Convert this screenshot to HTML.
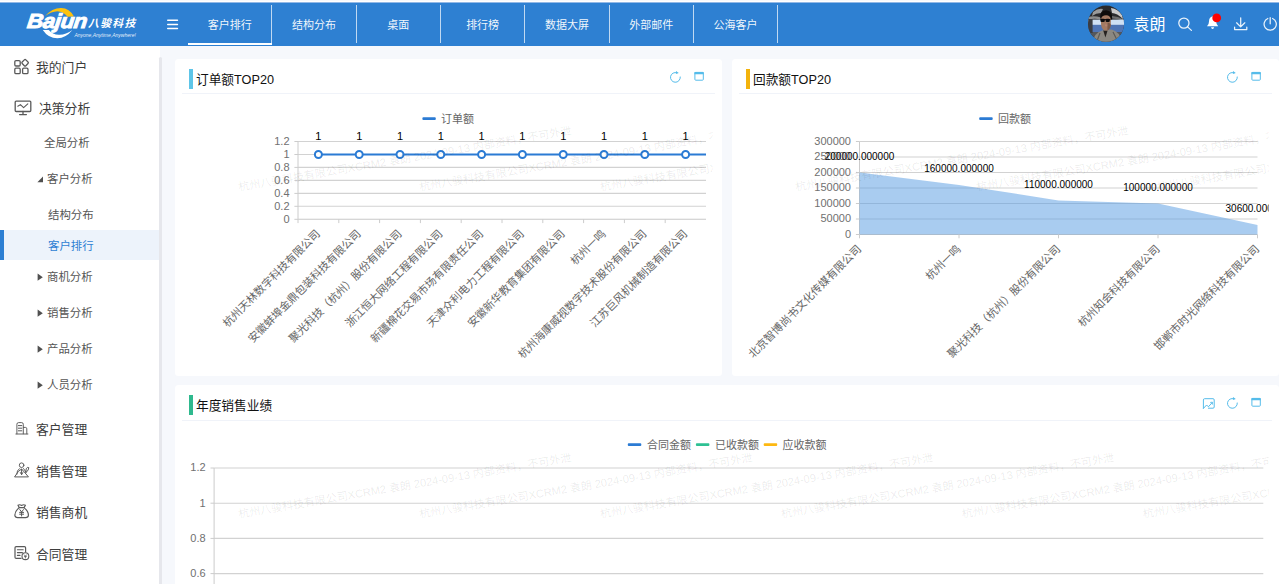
<!DOCTYPE html>
<html lang="zh-CN"><head><meta charset="utf-8"><title>客户排行</title>
<style>
*{box-sizing:border-box;margin:0;padding:0}
html,body{width:1279px;height:584px;overflow:hidden}
body{background:#f6f8fc;font-family:"Liberation Sans","Noto Sans CJK SC",sans-serif;position:relative;color:#333}
#top{position:absolute;left:0;top:0;width:1279px;height:46px;background:linear-gradient(#f8f9fb 0,#f8f9fb 1px,#fff 1px,#fff 2px,#92b8e6 2px,#92b8e6 3px,#2e80d2 3px)}
.tab{position:absolute;top:5px;height:38px;width:84.28px;border-right:1px solid rgba(255,255,255,.7);color:rgba(255,255,255,.94);font-size:11px;text-align:center;line-height:40px}
.tab.on:after{content:"";position:absolute;left:0;right:-1px;bottom:-1.7px;height:2px;background:#fff}
#side{position:absolute;left:0;top:46px;width:160px;height:538px;background:#fff}
#sbar{position:absolute;left:158.6px;top:57px;width:3px;height:600px;background:#e6e7ec;border-radius:2px}
.m1{position:absolute;left:36px;font-size:12.8px;color:#3d3d3d;line-height:20px;white-space:nowrap}
.m2{position:absolute;font-size:11.4px;color:#555;line-height:18px;white-space:nowrap}
.panel{position:absolute;background:#fff;border-radius:3.5px}
.ptitle{position:absolute;left:21px;top:12.2px;font-size:12.7px;color:#111;line-height:18px;white-space:nowrap;}
.pbar{position:absolute;left:14px;top:10px;width:4px;height:20px}
.pline{position:absolute;left:7px;right:7px;top:34px;height:1px;background:#f0f3f9}
svg text{font-family:"Liberation Sans","Noto Sans CJK SC",sans-serif}
svg{position:absolute;left:0;top:0}
</style></head><body>
<div id="side"></div>
<div id="sbar"></div>
<div id="top"></div>

<!-- tabs -->
<div class="tab on" style="left:188.10px">客户排行</div>
<div class="tab" style="left:272.40px">结构分布</div>
<div class="tab" style="left:356.70px">桌面</div>
<div class="tab" style="left:441.00px">排行榜</div>
<div class="tab" style="left:525.30px">数据大屏</div>
<div class="tab" style="left:609.60px">外部邮件</div>
<div class="tab" style="left:693.90px">公海客户</div>

<!-- sidebar items -->
<div class="m1" style="top:57.7px">我的门户</div>
<div class="m1" style="top:98.7px;left:39px">决策分析</div>
<div class="m2" style="top:134.3px;left:44px">全局分析</div>
<div class="m2" style="top:170.3px;left:47px">客户分析</div>
<div class="m2" style="top:206.3px;left:48px">结构分布</div>
<div style="position:absolute;left:0;top:229.5px;width:159px;height:30.7px;background:#edf3fb;border-left:4px solid #2d7fd3"></div>
<div class="m2" style="top:237.3px;left:48px;color:#2d7fd3">客户排行</div>
<div class="m2" style="top:268.3px;left:47px">商机分析</div>
<div class="m2" style="top:304.3px;left:47px">销售分析</div>
<div class="m2" style="top:340.3px;left:47px">产品分析</div>
<div class="m2" style="top:376.3px;left:47px">人员分析</div>
<div class="m1" style="top:419.7px">客户管理</div>
<div class="m1" style="top:461.7px">销售管理</div>
<div class="m1" style="top:502.7px">销售商机</div>
<div class="m1" style="top:544.7px">合同管理</div>

<!-- panels -->
<div class="panel" style="left:175px;top:59px;width:547px;height:317.3px"><div class="pbar" style="background:#5ec5e8"></div><div class="ptitle">订单额TOP20</div><div class="pline"></div></div>
<div class="panel" style="left:732px;top:59px;width:547px;height:317.3px"><div class="pbar" style="background:#f3b30d"></div><div class="ptitle">回款额TOP20</div><div class="pline"></div></div>
<div class="panel" style="left:175px;top:385px;width:1104px;height:260px"><div class="pbar" style="background:#2fb98e"></div><div class="ptitle" style="top:11.7px">年度销售业绩</div><div class="pline" style="top:35px"></div></div>

<svg width="1279" height="584" viewBox="0 0 1279 584">
<rect x="167" y="19.5" width="11.2" height="1.45" rx=".7" fill="#fff"/>
<rect x="167" y="23.7" width="11.2" height="1.45" rx=".7" fill="#fff"/>
<rect x="167" y="27.8" width="11.2" height="1.45" rx=".7" fill="#fff"/>
<g fill="none" stroke="#595959" stroke-width="1.3" stroke-linejoin="round"><rect x="14.8" y="60.6" width="5.4" height="5.4" rx="1.2"/><rect x="14.8" y="68.2" width="5.4" height="5.4" rx="1.2"/><rect x="22.6" y="68.2" width="5.4" height="5.4" rx="1.2"/><rect x="22.5" y="60.2" width="5.2" height="5.2" rx="1.1" transform="rotate(45 25.1 62.8)"/></g>
<g fill="none" stroke="#595959" stroke-width="1.3" stroke-linejoin="round" stroke-linecap="round"><rect x="15.2" y="101.1" width="15.6" height="10.4" rx="1"/><path d="M23 111.5V114.4M19.6 114.6H26.4"/><path d="M17.8 106.2L20.4 104.6L23.6 107.6L27.8 103.8" stroke-width="1.1"/></g>
<g fill="none" stroke="#595959" stroke-width=".95" stroke-linejoin="round" stroke-linecap="round"><path d="M16.9 433.8V424.3Q16.9 422.6 18.6 422.6H21.6Q23.3 422.6 23.3 424.3V433.8"/><path d="M23.3 427.4H25.4Q26.8 427.4 26.8 428.8V433.8"/><path d="M15.9 434H27.9"/><path d="M18.4 425.6H21.8M18.4 428.2H21.8M18.4 430.8H21.8" stroke-width="1"/></g>
<g fill="none" stroke="#595959" stroke-width=".95" stroke-linejoin="round" stroke-linecap="round"><circle cx="21.6" cy="465.2" r="2.3"/><path d="M19.4 468.6Q16.6 470.4 16.8 474.2M23.6 468.6L26 472.2"/><path d="M14.8 476.6L18.4 471.4L21.6 469L25.2 473L28.2 476.6Z" stroke-width="1"/><path d="M21.6 469.2V474.4M20.4 472.6L21.6 474.6L22.8 472.6" stroke-width="1"/><path d="M25.8 472.4L26.2 468.8Q27.4 466.6 28.8 467.6Q29 469.8 26.2 472.4" stroke-width="1"/></g>
<g fill="none" stroke="#595959" stroke-width="1.2" stroke-linejoin="round" stroke-linecap="round"><path d="M19.2 507.6L18 505.2Q19.6 504.2 21.6 505.4Q23.6 504.2 25.4 505.2L24 507.6"/><path d="M19.2 507.6Q14.6 511.4 14.9 515.4Q15.2 517.6 17.6 517.6H25.6Q28.2 517.6 28.4 515.4Q28.6 511.4 24 507.6Z"/><path d="M19.8 509.6L21.6 512L23.4 509.6M21.6 512V516M19.6 512.4H23.6M19.6 514.2H23.6" stroke-width="1"/></g>
<g fill="none" stroke="#595959" stroke-width="1.2" stroke-linejoin="round" stroke-linecap="round"><path d="M21 558.4H16.2Q15 558.4 15 557.2V547.8Q15 546.6 16.2 546.6H24.4Q25.6 546.6 25.6 547.8V552"/><path d="M17.4 549.8H23.2M17.4 552.6H22.4M17.4 555.4H20" stroke-width="1.1"/><circle cx="25.4" cy="556.2" r="3.4" fill="#fff" stroke-width="1.1"/><path d="M24.2 554.8L25.4 556.2L26.6 554.8M25.4 556.2V558M24.4 556.6H26.4" stroke-width=".8"/></g>
<path d="M37.4 182.2H43V176.6Z" fill="#505050"/>
<path d="M37.6 273.59999999999997L42.8 277.2L37.6 280.8Z" fill="#505050"/>
<path d="M37.6 309.59999999999997L42.8 313.2L37.6 316.8Z" fill="#505050"/>
<path d="M37.6 345.59999999999997L42.8 349.2L37.6 352.8Z" fill="#505050"/>
<path d="M37.6 381.59999999999997L42.8 385.2L37.6 388.8Z" fill="#505050"/>
<g fill="none" stroke="#fff" stroke-opacity=".9" stroke-width="1.25" stroke-linecap="round" stroke-linejoin="round"><circle cx="1183.9" cy="23.1" r="5.1"/><path d="M1187.6 26.9L1191.4 30.4"/><path d="M1240.7 17.8V26.6M1236.6 22.8L1240.7 26.9L1244.8 22.8M1234.6 27.2V29.6H1246.8V27.2"/><path d="M1270.2 17.6V23.8M1267.8 18.5A6.1 6.1 0 1 0 1272.6 18.5"/></g>
<path d="M1212.6 16.2Q1209 17 1209 21.4Q1209 24.4 1207 26.2H1218.2Q1216.2 24.4 1216.2 21.4Q1216.2 17 1212.6 16.2Z" fill="#fff"/><path d="M1211 27.2H1214.2Q1213.8 28.9 1212.6 28.9Q1211.4 28.9 1211 27.2Z" fill="#fff"/><circle cx="1216.7" cy="17.9" r="4.4" fill="#ff0000"/>
<g fill="none" stroke="#55bcea" stroke-width="1" stroke-linecap="round" stroke-linejoin="round"><path d="M677.0 72.7A4.9 4.9 0 1 0 680.3 77.0"/></g><path d="M676.0 71.1L678.8 73.0L675.8 74.0Z" fill="#55bcea"/>
<rect x="694.9" y="72.4" width="8.4" height="7.8" rx=".8" fill="none" stroke="#55bcea" stroke-width="1"/><rect x="694.4" y="71.9" width="9.4" height="2.4" rx=".6" fill="#55bcea"/>
<g fill="none" stroke="#55bcea" stroke-width="1" stroke-linecap="round" stroke-linejoin="round"><path d="M1234.0 72.7A4.9 4.9 0 1 0 1237.3 77.0"/></g><path d="M1233.0 71.1L1235.8 73.0L1232.8 74.0Z" fill="#55bcea"/>
<rect x="1251.9" y="72.4" width="8.4" height="7.8" rx=".8" fill="none" stroke="#55bcea" stroke-width="1"/><rect x="1251.4" y="71.9" width="9.4" height="2.4" rx=".6" fill="#55bcea"/>
<g fill="none" stroke="#55bcea" stroke-width="1" stroke-linecap="round" stroke-linejoin="round"><path d="M1234.0 398.7A4.9 4.9 0 1 0 1237.3 403.0"/></g><path d="M1233.0 397.1L1235.8 399.0L1232.8 400.0Z" fill="#55bcea"/>
<rect x="1251.9" y="398.4" width="8.4" height="7.8" rx=".8" fill="none" stroke="#55bcea" stroke-width="1"/><rect x="1251.4" y="397.9" width="9.4" height="2.4" rx=".6" fill="#55bcea"/>
<g fill="none" stroke="#55bcea" stroke-width="1" stroke-linejoin="round" stroke-linecap="round"><path d="M1203.4 408.4V399.9Q1203.4 398.7 1204.6 398.7H1213Q1214.2 398.7 1214.2 399.9V407Q1214.2 408.2 1213 408.2H1208.4"/><path d="M1203.6 408.2L1206.6 405L1208.4 406.8L1212 402.8" stroke-width="1"/><path d="M1210.6 402.4L1212.4 402.2L1212.4 404.2" stroke-width=".9"/></g>
<path d="M45.2 16.1Q52 8.2 61 8Q69.6 8.2 74 16.6L67.6 16.8Q63.4 11.4 57.4 11.2Q51.4 11.4 45.2 16.1Z" fill="#fdc20f"/>
<path d="M42.8 30Q48.2 38.2 57.4 38.3Q66 38 72.4 30Q65.4 35.2 58.8 34.8Q52.6 34.6 48.8 30Z" fill="#fff"/>
<g transform="translate(26.6,28) scale(1.125,1.02) skewX(-6)"><text x="0" y="0" font-size="20" font-weight="bold" font-style="italic" fill="#fff" stroke="#fff" stroke-width=".9" letter-spacing="-0.5">Bajun</text></g>
<g transform="translate(88,27.1) skewX(-14)"><text x="0" y="0" font-size="10.8" font-weight="bold" fill="#fff" letter-spacing="1.4">八骏科技</text></g>
<text x="74.4" y="36.6" font-size="5" font-style="italic" fill="#fff" fill-opacity=".9">Anyone,Anytime,Anywhere!</text>
<defs><clipPath id="avc"><circle cx="1106" cy="23.7" r="18.1"/></clipPath></defs>
<g clip-path="url(#avc)">
<rect x="1087" y="5" width="38" height="38" fill="#2b2b2d"/>
<path d="M1093 12Q1098 8 1103 9L1101 13Q1096 13 1092 16Z" fill="#9a9a9a"/>
<path d="M1111 8Q1118 9 1122 15L1123 19Q1117 13 1112 13Z" fill="#c9c9c9"/>
<path d="M1088 17Q1094 15.4 1101 17.4L1101 19.4Q1094 18 1088 19.6Z" fill="#8d8d8d"/>
<path d="M1112 16Q1118 16 1124 19.6L1124 21Q1118 18.6 1112 18.4Z" fill="#6d6d6d"/>
<rect x="1087" y="19.6" width="38" height="5.4" fill="#cfe0f4"/>
<rect x="1087" y="24.8" width="38" height="7.6" fill="#4f74b4"/>
<rect x="1087" y="32" width="38" height="11" fill="#54575c"/>
<rect x="1088" y="19" width="4.6" height="14" fill="#3a3c42"/>
<path d="M1092.6 44Q1093 33.4 1102.6 30.2L1111.6 29.4Q1121 32 1122.6 44Z" fill="#8b8881"/>
<path d="M1100 33L1097 41M1113 32L1117 40" stroke="#5d5b57" stroke-width="1.2" fill="none"/>
<path d="M1103.2 30.4L1105.4 37.4L1107.6 30.6Z" fill="#25221f"/>
<path d="M1101 17.2Q1101 14.4 1106 14.4Q1111 14.4 1111 17.6L1110.8 24.6Q1110.2 29.6 1107.4 30.6L1104.4 30.6Q1101.4 28.6 1101 24Z" fill="#a47a62"/>
<path d="M1107.6 22.4Q1110.8 23 1110.8 25Q1110.2 29.6 1107.4 30.6Z" fill="#7c5948"/>
<path d="M1105 24.4Q1106.6 23.8 1107.4 25L1106.8 26.6L1105 26.2Z" fill="#b5806f"/>
<path d="M1100.2 18.6Q1099.4 10.4 1106.2 10.2Q1113 10.4 1112.2 19.4L1110.8 19.4Q1110.6 15.4 1106 15.2Q1101.6 15.2 1101.2 18.8Z" fill="#0e0c0b"/>
<rect x="1100.4" y="18.8" width="4.4" height="3.2" rx="1.3" fill="#0a0a0c"/><rect x="1105.6" y="18.8" width="4.2" height="3.2" rx="1.3" fill="#0a0a0c"/><rect x="1100.4" y="19" width="10" height=".9" fill="#0a0a0c"/>
</g>
<text x="1133.6" y="30.2" font-size="16" fill="#fff">袁朗</text>
<g id="c1">
<line x1="298" y1="141.5" x2="706" y2="141.5" stroke="#d2d2d2" stroke-width="1.1"/>
<line x1="294.4" y1="141.5" x2="298" y2="141.5" stroke="#ccc" stroke-width="1"/>
<text x="289.5" y="144.9" text-anchor="end" font-size="11" fill="#707070">1.2</text>
<line x1="298" y1="154.5" x2="706" y2="154.5" stroke="#d2d2d2" stroke-width="1.1"/>
<line x1="294.4" y1="154.5" x2="298" y2="154.5" stroke="#ccc" stroke-width="1"/>
<text x="289.5" y="157.9" text-anchor="end" font-size="11" fill="#707070">1</text>
<line x1="298" y1="167.4" x2="706" y2="167.4" stroke="#d2d2d2" stroke-width="1.1"/>
<line x1="294.4" y1="167.4" x2="298" y2="167.4" stroke="#ccc" stroke-width="1"/>
<text x="289.5" y="170.8" text-anchor="end" font-size="11" fill="#707070">0.8</text>
<line x1="298" y1="180.4" x2="706" y2="180.4" stroke="#d2d2d2" stroke-width="1.1"/>
<line x1="294.4" y1="180.4" x2="298" y2="180.4" stroke="#ccc" stroke-width="1"/>
<text x="289.5" y="183.8" text-anchor="end" font-size="11" fill="#707070">0.6</text>
<line x1="298" y1="193.4" x2="706" y2="193.4" stroke="#d2d2d2" stroke-width="1.1"/>
<line x1="294.4" y1="193.4" x2="298" y2="193.4" stroke="#ccc" stroke-width="1"/>
<text x="289.5" y="196.8" text-anchor="end" font-size="11" fill="#707070">0.4</text>
<line x1="298" y1="206.3" x2="706" y2="206.3" stroke="#d2d2d2" stroke-width="1.1"/>
<line x1="294.4" y1="206.3" x2="298" y2="206.3" stroke="#ccc" stroke-width="1"/>
<text x="289.5" y="209.7" text-anchor="end" font-size="11" fill="#707070">0.2</text>
<line x1="298" y1="219.3" x2="706" y2="219.3" stroke="#c8c8c8" stroke-width="1.1"/>
<line x1="294.4" y1="219.3" x2="298" y2="219.3" stroke="#ccc" stroke-width="1"/>
<text x="289.5" y="222.7" text-anchor="end" font-size="11" fill="#707070">0</text>
<line x1="298" y1="141.5" x2="298" y2="219.3" stroke="#ccc" stroke-width="1"/>
<line x1="298.0" y1="219.3" x2="298.0" y2="223.10000000000002" stroke="#ccc" stroke-width="1"/>
<line x1="338.8" y1="219.3" x2="338.8" y2="223.10000000000002" stroke="#ccc" stroke-width="1"/>
<line x1="379.6" y1="219.3" x2="379.6" y2="223.10000000000002" stroke="#ccc" stroke-width="1"/>
<line x1="420.4" y1="219.3" x2="420.4" y2="223.10000000000002" stroke="#ccc" stroke-width="1"/>
<line x1="461.2" y1="219.3" x2="461.2" y2="223.10000000000002" stroke="#ccc" stroke-width="1"/>
<line x1="502.0" y1="219.3" x2="502.0" y2="223.10000000000002" stroke="#ccc" stroke-width="1"/>
<line x1="542.8" y1="219.3" x2="542.8" y2="223.10000000000002" stroke="#ccc" stroke-width="1"/>
<line x1="583.6" y1="219.3" x2="583.6" y2="223.10000000000002" stroke="#ccc" stroke-width="1"/>
<line x1="624.4" y1="219.3" x2="624.4" y2="223.10000000000002" stroke="#ccc" stroke-width="1"/>
<line x1="665.2" y1="219.3" x2="665.2" y2="223.10000000000002" stroke="#ccc" stroke-width="1"/>
<line x1="318.4" y1="154.5" x2="706" y2="154.5" stroke="#2b7bd4" stroke-width="2"/>
<circle cx="318.4" cy="154.5" r="3.5" fill="#fff" stroke="#2b7bd4" stroke-width="2"/>
<text x="318.4" y="139.9" text-anchor="middle" font-size="11" fill="#000">1</text>
<text transform="translate(318.0,231.6) rotate(-45)" text-anchor="end" font-size="11" fill="#666" dy="4">杭州天林数字科技有限公司</text>
<circle cx="359.2" cy="154.5" r="3.5" fill="#fff" stroke="#2b7bd4" stroke-width="2"/>
<text x="359.2" y="139.9" text-anchor="middle" font-size="11" fill="#000">1</text>
<text transform="translate(358.8,231.6) rotate(-45)" text-anchor="end" font-size="11" fill="#666" dy="4">安徽蚌埠金鼎包装科技有限公司</text>
<circle cx="400.0" cy="154.5" r="3.5" fill="#fff" stroke="#2b7bd4" stroke-width="2"/>
<text x="400.0" y="139.9" text-anchor="middle" font-size="11" fill="#000">1</text>
<text transform="translate(399.6,231.6) rotate(-45)" text-anchor="end" font-size="11" fill="#666" dy="4">聚光科技（杭州）股份有限公司</text>
<circle cx="440.8" cy="154.5" r="3.5" fill="#fff" stroke="#2b7bd4" stroke-width="2"/>
<text x="440.8" y="139.9" text-anchor="middle" font-size="11" fill="#000">1</text>
<text transform="translate(440.4,231.6) rotate(-45)" text-anchor="end" font-size="11" fill="#666" dy="4">浙江恒大网络工程有限公司</text>
<circle cx="481.6" cy="154.5" r="3.5" fill="#fff" stroke="#2b7bd4" stroke-width="2"/>
<text x="481.6" y="139.9" text-anchor="middle" font-size="11" fill="#000">1</text>
<text transform="translate(481.2,231.6) rotate(-45)" text-anchor="end" font-size="11" fill="#666" dy="4">新疆棉花交易市场有限责任公司</text>
<circle cx="522.4" cy="154.5" r="3.5" fill="#fff" stroke="#2b7bd4" stroke-width="2"/>
<text x="522.4" y="139.9" text-anchor="middle" font-size="11" fill="#000">1</text>
<text transform="translate(522.0,231.6) rotate(-45)" text-anchor="end" font-size="11" fill="#666" dy="4">天津众利电力工程有限公司</text>
<circle cx="563.2" cy="154.5" r="3.5" fill="#fff" stroke="#2b7bd4" stroke-width="2"/>
<text x="563.2" y="139.9" text-anchor="middle" font-size="11" fill="#000">1</text>
<text transform="translate(562.8,231.6) rotate(-45)" text-anchor="end" font-size="11" fill="#666" dy="4">安徽新华教育集团有限公司</text>
<circle cx="604.0" cy="154.5" r="3.5" fill="#fff" stroke="#2b7bd4" stroke-width="2"/>
<text x="604.0" y="139.9" text-anchor="middle" font-size="11" fill="#000">1</text>
<text transform="translate(603.6,231.6) rotate(-45)" text-anchor="end" font-size="11" fill="#666" dy="4">杭州一鸣</text>
<circle cx="644.8" cy="154.5" r="3.5" fill="#fff" stroke="#2b7bd4" stroke-width="2"/>
<text x="644.8" y="139.9" text-anchor="middle" font-size="11" fill="#000">1</text>
<text transform="translate(644.4,231.6) rotate(-45)" text-anchor="end" font-size="11" fill="#666" dy="4">杭州海康威视数字技术股份有限公司</text>
<circle cx="685.6" cy="154.5" r="3.5" fill="#fff" stroke="#2b7bd4" stroke-width="2"/>
<text x="685.6" y="139.9" text-anchor="middle" font-size="11" fill="#000">1</text>
<text transform="translate(685.2,231.6) rotate(-45)" text-anchor="end" font-size="11" fill="#666" dy="4">江苏巨风机械制造有限公司</text>
<rect x="422.4" y="117.3" width="13.4" height="2.7" rx=".9" fill="#2b7bd4"/>
<text x="441" y="122.7" font-size="11" fill="#666">订单额</text>
</g>
<g id="c2" clip-path="url(#wc2)">
<line x1="859.5" y1="141.5" x2="1257.5" y2="141.5" stroke="#d2d2d2" stroke-width="1.1"/>
<line x1="855.9" y1="141.5" x2="859.5" y2="141.5" stroke="#ccc" stroke-width="1"/>
<text x="851.0" y="144.9" text-anchor="end" font-size="11" fill="#707070">300000</text>
<line x1="859.5" y1="157.0" x2="1257.5" y2="157.0" stroke="#d2d2d2" stroke-width="1.1"/>
<line x1="855.9" y1="157.0" x2="859.5" y2="157.0" stroke="#ccc" stroke-width="1"/>
<text x="851.0" y="160.4" text-anchor="end" font-size="11" fill="#707070">250000</text>
<line x1="859.5" y1="172.5" x2="1257.5" y2="172.5" stroke="#d2d2d2" stroke-width="1.1"/>
<line x1="855.9" y1="172.5" x2="859.5" y2="172.5" stroke="#ccc" stroke-width="1"/>
<text x="851.0" y="175.9" text-anchor="end" font-size="11" fill="#707070">200000</text>
<line x1="859.5" y1="188.0" x2="1257.5" y2="188.0" stroke="#d2d2d2" stroke-width="1.1"/>
<line x1="855.9" y1="188.0" x2="859.5" y2="188.0" stroke="#ccc" stroke-width="1"/>
<text x="851.0" y="191.4" text-anchor="end" font-size="11" fill="#707070">150000</text>
<line x1="859.5" y1="203.5" x2="1257.5" y2="203.5" stroke="#d2d2d2" stroke-width="1.1"/>
<line x1="855.9" y1="203.5" x2="859.5" y2="203.5" stroke="#ccc" stroke-width="1"/>
<text x="851.0" y="206.9" text-anchor="end" font-size="11" fill="#707070">100000</text>
<line x1="859.5" y1="219.0" x2="1257.5" y2="219.0" stroke="#d2d2d2" stroke-width="1.1"/>
<line x1="855.9" y1="219.0" x2="859.5" y2="219.0" stroke="#ccc" stroke-width="1"/>
<text x="851.0" y="222.4" text-anchor="end" font-size="11" fill="#707070">50000</text>
<line x1="859.5" y1="234.5" x2="1257.5" y2="234.5" stroke="#c8c8c8" stroke-width="1.1"/>
<line x1="855.9" y1="234.5" x2="859.5" y2="234.5" stroke="#ccc" stroke-width="1"/>
<text x="851.0" y="237.9" text-anchor="end" font-size="11" fill="#707070">0</text>
<line x1="859.5" y1="141.5" x2="859.5" y2="234.5" stroke="#ccc" stroke-width="1"/>
<polygon points="859.5,172.5 959.0,184.9 1058.5,200.4 1158.0,203.5 1257.5,225.0 1257.5,234.5 859.5,234.5" fill="#5b9ee2" fill-opacity="0.52"/>
<line x1="859.5" y1="234.5" x2="859.5" y2="238.3" stroke="#ccc" stroke-width="1"/>
<text x="859.5" y="159.7" text-anchor="middle" font-size="10" fill="#000">200000.000000</text>
<text transform="translate(859.1,246.8) rotate(-45)" text-anchor="end" font-size="11" fill="#666" dy="4">北京智博尚书文化传媒有限公司</text>
<line x1="959.0" y1="234.5" x2="959.0" y2="238.3" stroke="#ccc" stroke-width="1"/>
<text x="959.0" y="172.1" text-anchor="middle" font-size="10" fill="#000">160000.000000</text>
<text transform="translate(958.6,246.8) rotate(-45)" text-anchor="end" font-size="11" fill="#666" dy="4">杭州一鸣</text>
<line x1="1058.5" y1="234.5" x2="1058.5" y2="238.3" stroke="#ccc" stroke-width="1"/>
<text x="1058.5" y="187.6" text-anchor="middle" font-size="10" fill="#000">110000.000000</text>
<text transform="translate(1058.1,246.8) rotate(-45)" text-anchor="end" font-size="11" fill="#666" dy="4">聚光科技（杭州）股份有限公司</text>
<line x1="1158.0" y1="234.5" x2="1158.0" y2="238.3" stroke="#ccc" stroke-width="1"/>
<text x="1158.0" y="190.7" text-anchor="middle" font-size="10" fill="#000">100000.000000</text>
<text transform="translate(1157.6,246.8) rotate(-45)" text-anchor="end" font-size="11" fill="#666" dy="4">杭州知会科技有限公司</text>
<line x1="1257.5" y1="234.5" x2="1257.5" y2="238.3" stroke="#ccc" stroke-width="1"/>
<text x="1257.5" y="212.2" text-anchor="middle" font-size="10" fill="#000">30600.000000</text>
<text transform="translate(1257.1,246.8) rotate(-45)" text-anchor="end" font-size="11" fill="#666" dy="4">邯郸市时光网络科技有限公司</text>
<rect x="979.2" y="117.3" width="13.5" height="2.7" rx=".9" fill="#2b7bd4"/>
<text x="998" y="122.7" font-size="11" fill="#666">回款额</text>
</g>
<g id="c3">
<line x1="214.1" y1="468.0" x2="1263.3" y2="468.0" stroke="#d2d2d2" stroke-width="1.1"/>
<line x1="210.5" y1="468.0" x2="214.1" y2="468.0" stroke="#ccc" stroke-width="1"/>
<text x="205.6" y="471.4" text-anchor="end" font-size="11" fill="#707070">1.2</text>
<line x1="214.1" y1="503.2" x2="1263.3" y2="503.2" stroke="#d2d2d2" stroke-width="1.1"/>
<line x1="210.5" y1="503.2" x2="214.1" y2="503.2" stroke="#ccc" stroke-width="1"/>
<text x="205.6" y="506.6" text-anchor="end" font-size="11" fill="#707070">1</text>
<line x1="214.1" y1="538.4" x2="1263.3" y2="538.4" stroke="#d2d2d2" stroke-width="1.1"/>
<line x1="210.5" y1="538.4" x2="214.1" y2="538.4" stroke="#ccc" stroke-width="1"/>
<text x="205.6" y="541.8" text-anchor="end" font-size="11" fill="#707070">0.8</text>
<line x1="214.1" y1="573.6" x2="1263.3" y2="573.6" stroke="#d2d2d2" stroke-width="1.1"/>
<line x1="210.5" y1="573.6" x2="214.1" y2="573.6" stroke="#ccc" stroke-width="1"/>
<text x="205.6" y="577.0" text-anchor="end" font-size="11" fill="#707070">0.6</text>
<line x1="214.1" y1="608.8" x2="1263.3" y2="608.8" stroke="#d2d2d2" stroke-width="1.1"/>
<line x1="210.5" y1="608.8" x2="214.1" y2="608.8" stroke="#ccc" stroke-width="1"/>
<text x="205.6" y="612.2" text-anchor="end" font-size="11" fill="#707070">0.4</text>
<line x1="214.1" y1="468.0" x2="214.1" y2="589" stroke="#ccc" stroke-width="1"/>
<rect x="627.8" y="443.3" width="13.5" height="2.7" rx=".9" fill="#2b7bd4"/>
<text x="647" y="449" font-size="11" fill="#666">合同金额</text>
<rect x="695.9" y="443.3" width="13.5" height="2.7" rx=".9" fill="#2ec193"/>
<text x="715" y="449" font-size="11" fill="#666">已收款额</text>
<rect x="763.7" y="443.3" width="13.5" height="2.7" rx=".9" fill="#fdb811"/>
<text x="782.6" y="449" font-size="11" fill="#666">应收款额</text>
</g>
<g id="wm">
<defs><clipPath id="wc1"><rect x="182" y="94" width="530.6" height="276"/></clipPath><clipPath id="wc2"><rect x="739" y="94" width="529.7" height="276"/></clipPath><clipPath id="wc3"><rect x="182" y="421" width="1086.7" height="200"/></clipPath></defs>
<g clip-path="url(#wc1)">
<text transform="translate(239.0,191) rotate(-9.7)" font-size="11.1" fill="#000" fill-opacity="0.085">杭州八骏科技有限公司XCRM2 袁朗 2024-09-13 内部资料，不可外泄</text>
<text transform="translate(419.9,191) rotate(-9.7)" font-size="11.1" fill="#000" fill-opacity="0.085">杭州八骏科技有限公司XCRM2 袁朗 2024-09-13 内部资料，不可外泄</text>
<text transform="translate(600.8,191) rotate(-9.7)" font-size="11.1" fill="#000" fill-opacity="0.085">杭州八骏科技有限公司XCRM2 袁朗 2024-09-13 内部资料，不可外泄</text>
</g>
<g clip-path="url(#wc2)">
<text transform="translate(796.0,191) rotate(-9.7)" font-size="11.1" fill="#000" fill-opacity="0.085">杭州八骏科技有限公司XCRM2 袁朗 2024-09-13 内部资料，不可外泄</text>
<text transform="translate(976.9,191) rotate(-9.7)" font-size="11.1" fill="#000" fill-opacity="0.085">杭州八骏科技有限公司XCRM2 袁朗 2024-09-13 内部资料，不可外泄</text>
<text transform="translate(1157.8,191) rotate(-9.7)" font-size="11.1" fill="#000" fill-opacity="0.085">杭州八骏科技有限公司XCRM2 袁朗 2024-09-13 内部资料，不可外泄</text>
</g>
<g clip-path="url(#wc3)">
<text transform="translate(239.0,518) rotate(-9.7)" font-size="11.1" fill="#000" fill-opacity="0.085">杭州八骏科技有限公司XCRM2 袁朗 2024-09-13 内部资料，不可外泄</text>
<text transform="translate(419.9,518) rotate(-9.7)" font-size="11.1" fill="#000" fill-opacity="0.085">杭州八骏科技有限公司XCRM2 袁朗 2024-09-13 内部资料，不可外泄</text>
<text transform="translate(600.8,518) rotate(-9.7)" font-size="11.1" fill="#000" fill-opacity="0.085">杭州八骏科技有限公司XCRM2 袁朗 2024-09-13 内部资料，不可外泄</text>
<text transform="translate(781.7,518) rotate(-9.7)" font-size="11.1" fill="#000" fill-opacity="0.085">杭州八骏科技有限公司XCRM2 袁朗 2024-09-13 内部资料，不可外泄</text>
<text transform="translate(962.6,518) rotate(-9.7)" font-size="11.1" fill="#000" fill-opacity="0.085">杭州八骏科技有限公司XCRM2 袁朗 2024-09-13 内部资料，不可外泄</text>
<text transform="translate(1143.5,518) rotate(-9.7)" font-size="11.1" fill="#000" fill-opacity="0.085">杭州八骏科技有限公司XCRM2 袁朗 2024-09-13 内部资料，不可外泄</text>
</g>
</g>
</svg>
</body></html>
